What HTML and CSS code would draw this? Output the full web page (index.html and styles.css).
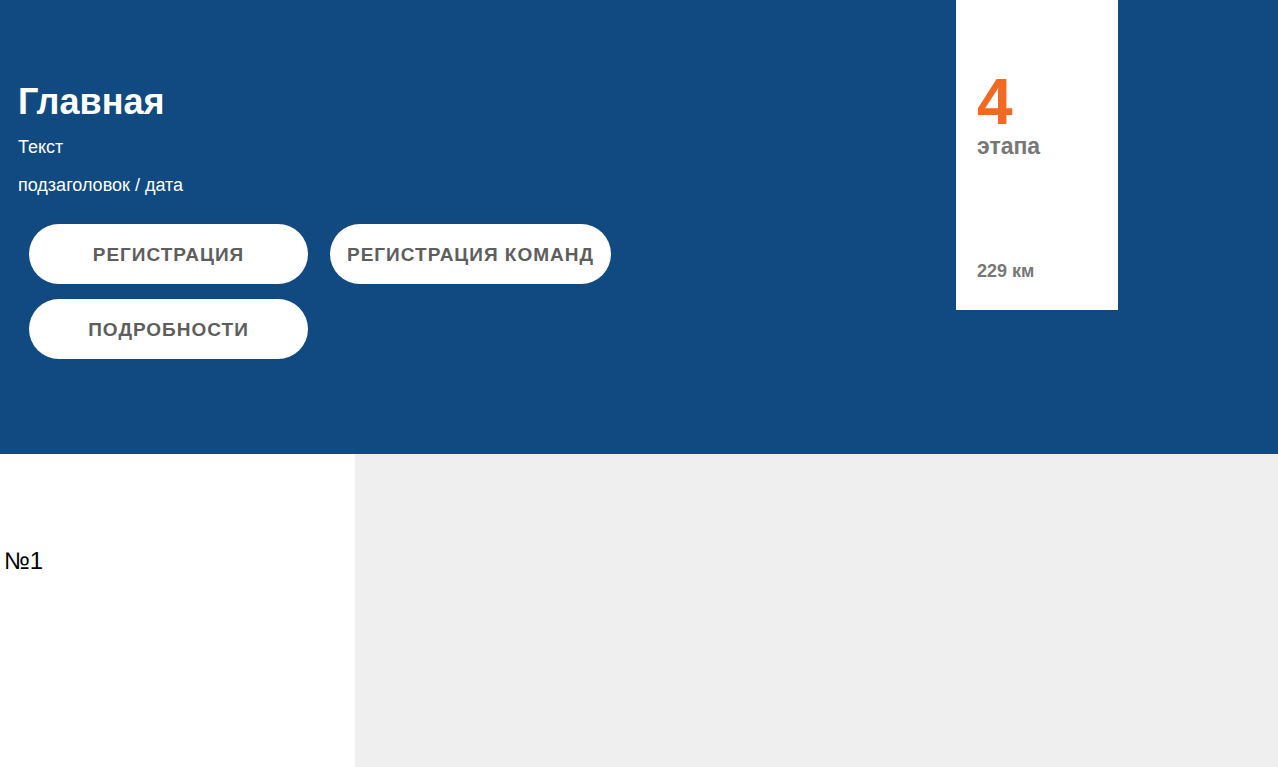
FILE: index.html
```html
<!DOCTYPE html>
<html lang="ru">
<head>
<meta charset="utf-8">
<title>Главная</title>
<link rel="stylesheet" href="styles.css">
</head>
<body>
<header class="hero">
  <div class="hero-main">
    <h1 class="hero-title">Главная</h1>
    <p class="hero-text">Текст</p>
    <p class="hero-sub">подзаголовок / дата</p>
    <div class="hero-buttons">
      <a class="btn" href="#">Регистрация</a>
      <a class="btn" href="#">Регистрация команд</a>
      <a class="btn" href="#">Подробности</a>
    </div>
  </div>
  <aside class="stat-card">
    <div class="stat-num">4</div>
    <div class="stat-label">этапа</div>
    <div class="stat-dist">229 км</div>
  </aside>
</header>
<main class="content">
  <div class="side">
    <div class="side-item">№1</div>
  </div>
  <div class="panel"></div>
</main>
</body>
</html>
```
FILE: styles.css
```css
* { box-sizing: border-box; }
html, body { margin: 0; padding: 0; height: 100%; }
body {
  font-family: "Liberation Sans", Arial, sans-serif;
  display: flex;
  flex-direction: column;
  min-height: 767px;
}
.hero {
  background: #114a80;
  height: 454px;
  display: flex;
  flex-shrink: 0;
}
.hero-main {
  width: 956px;
  padding: 78px 0 0 18px;
}
.hero-title {
  margin: 0;
  color: #fff;
  font-size: 36px;
  font-weight: bold;
  line-height: 48px;
}
.hero-text, .hero-sub {
  margin: 0;
  color: #fff;
  font-size: 18px;
  line-height: 20px;
}
.hero-text { margin-top: 11px; }
.hero-sub { margin-top: 18px; }
.hero-buttons {
  display: flex;
  flex-wrap: wrap;
  gap: 15px 22px;
  width: 620px;
  padding: 29px 0 0 11px;
}
.btn {
  display: flex;
  align-items: center;
  justify-content: center;
  min-width: 279px;
  height: 60px;
  padding: 2px 17px 0;
  border-radius: 30px;
  background: #fff;
  color: #5e5e5e;
  text-decoration: none;
  text-transform: uppercase;
  font-weight: bold;
  font-size: 19px;
  letter-spacing: 1px;
}
.stat-card {
  width: 162px;
  height: 310px;
  background: #fff;
  padding: 70px 0 0 21px;
  display: flex;
  flex-direction: column;
}
.stat-num {
  color: #f26a21;
  font-size: 64px;
  font-weight: bold;
  line-height: 58px;
  margin-top: 3px;
}
.stat-label {
  color: #777;
  font-size: 23px;
  font-weight: bold;
  line-height: 26px;
  margin-top: 2px;
}
.stat-dist {
  margin-top: auto;
  margin-bottom: 28px;
  color: #777;
  font-size: 18px;
  font-weight: bold;
}
.content {
  flex: 1;
  display: flex;
}
.side {
  width: 355px;
  background: #fff;
  padding: 93px 0 0 4px;
}
.side-item {
  font-size: 24px;
  color: #000;
}
.panel {
  flex: 1;
  background: #efefef;
}
```
